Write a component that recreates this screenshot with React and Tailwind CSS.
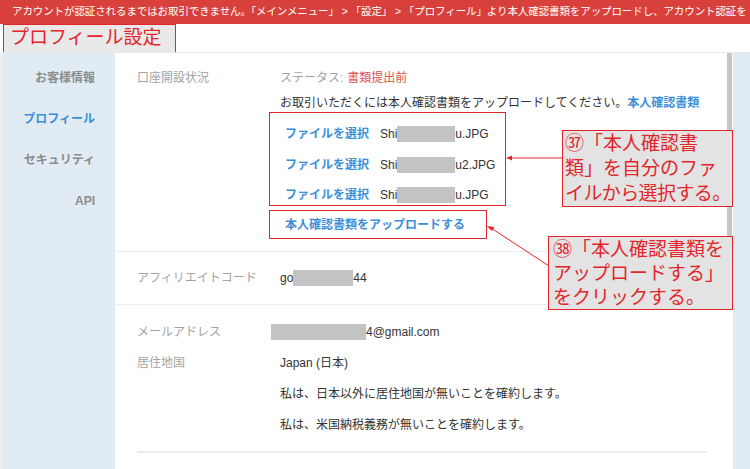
import React from 'react';

const font = "font-['Liberation_Sans','Noto_Sans_CJK_JP',sans-serif]";

function Blur({ w }) {
  return <span className="inline-block h-[16px] bg-[#c3c3c3]" style={{ width: w }} />;
}

function FileRow({ suffix }) {
  return (
    <div className="flex h-[20px] items-center text-[12px]">
      <span className="font-bold text-[#3b8fd9]">ファイルを選択</span>
      <span className="ml-[11px] text-[#333]">Shi</span>
      <Blur w={58} />
      <span className="text-[#333]">{suffix}</span>
    </div>
  );
}

function Row({ label, children, className = '' }) {
  return (
    <div className={`flex h-[20px] items-center text-[12px] ${className}`}>
      <div className="w-[143px] shrink-0 text-[#a3a3a3]">{label}</div>
      <div className="text-[#333]">{children}</div>
    </div>
  );
}

export default function App() {
  return (
    <div className={`relative h-[469px] w-[750px] overflow-hidden bg-white ${font}`}>
      {/* warning banner */}
      <div className="flex h-[24px] items-center overflow-hidden whitespace-nowrap bg-[#d8413b] pl-[12px] text-[10.5px] tracking-[-0.1px] text-white">
        アカウントが認証されるまではお取引できません。「メインメニュー」 &gt; 「設定」 &gt; 「プロフィール」より本人確認書類をアップロードし、アカウント認証を
      </div>

      {/* title */}
      <div className="h-[28px] pl-[3px]">
        <div className="flex h-[29px] w-[173px] items-center border border-[#e2262b] bg-[#e9e9e9] pl-[6px] text-[19px] text-[#e2262b]">
          プロフィール設定
        </div>
      </div>

      <div className="flex h-[417px] border-t border-[#e3eaf0]">
        <div className="w-[3px] bg-[#eceeef]" />

        {/* sidebar */}
        <div className="flex w-[112px] flex-col items-end gap-[23px] bg-[#e1ebf3] pr-[20px] pt-[16px] text-[12px] font-bold text-[#8c8c8c]">
          <div className="flex h-[18px] items-center">お客様情報</div>
          <div className="flex h-[18px] items-center text-[#3b8fd9]">プロフィール</div>
          <div className="flex h-[18px] items-center">セキュリティ</div>
          <div className="flex h-[18px] items-center">API</div>
        </div>

        {/* main panel */}
        <div className="w-[612px] bg-white">
          <div className="flex border-b border-[#ececec] pb-[12px] pl-[22px] pt-[16px] text-[12px]">
            <div className="flex h-[18px] w-[143px] shrink-0 items-center text-[#a3a3a3]">口座開設状況</div>
            <div className="flex flex-col">
              <div className="flex h-[18px] items-center">
                <span className="text-[#a3a3a3]">ステータス:</span>
                <span className="ml-[4px] text-[#d9534f]">書類提出前</span>
              </div>
              <div className="mt-[7px] flex h-[18px] items-center whitespace-nowrap text-[#333]">
                お取引いただくには本人確認書類をアップロードしてください。
                <span className="font-bold text-[#3b8fd9]">本人確認書類</span>
              </div>
              <div className="-ml-[11px] flex w-[237px] flex-col gap-[10.5px] border border-[#e2262b] pl-[15px] pt-[11px]">
                <FileRow suffix="u.JPG" />
                <FileRow suffix="u2.JPG" />
                <FileRow suffix="u.JPG" />
              </div>
              <div className="-ml-[11px] mt-[4px] flex h-[29px] w-[218px] items-center border border-[#e2262b] pl-[15px] font-bold text-[#3b8fd9]">
                本人確認書類をアップロードする
              </div>
            </div>
          </div>

          <div className="flex h-[53px] items-center border-b border-[#ececec] pl-[22px]">
            <Row label="アフィリエイトコード">
              <span className="flex items-center">go<Blur w={60} />44</span>
            </Row>
          </div>

          <div className="px-[22px] pt-[17px]">
            <div className="flex flex-col gap-[11px]">
              <Row label="メールアドレス">
                <span className="-ml-[9px] flex items-center"><Blur w={95} />4@gmail.com</span>
              </Row>
              <Row label="居住地国">Japan (日本)</Row>
              <Row label="">私は、日本以外に居住地国が無いことを確約します。</Row>
              <Row label="">私は、米国納税義務が無いことを確約します。</Row>
            </div>
            <div className="mt-[16px] h-[2px] w-[570px] bg-[#ececec]" />
          </div>
        </div>

        {/* scrollbar */}
        <div className="w-[6px] bg-white">
          <div className="h-[221px] w-[5px] bg-[#c6c6c6]" />
        </div>
        <div className="flex-1 bg-[#e1ebf3]" />
      </div>

      {/* annotations */}
      <svg className="pointer-events-none absolute left-0 top-0" width="750" height="469">
        <line x1="562" y1="158" x2="510" y2="158" stroke="#e2262b" strokeWidth="1" />
        <polygon points="506,158 512,155.5 512,160.5" fill="#e2262b" />
        <line x1="549" y1="266" x2="491" y2="228" stroke="#e2262b" strokeWidth="1" />
        <polygon points="487,226 494.5,227 491.8,231" fill="#e2262b" />
      </svg>

      <div className="absolute left-[562px] top-[130px] h-[77px] w-[171px] overflow-visible whitespace-nowrap border border-[#e2262b] bg-[#e3e3e3] pl-[2px] text-[19px] leading-[25px] text-[#e2262b]">
        <div>㊲「本人確認書</div>
        <div>類」を自分のファ</div>
        <div className="tracking-[-0.6px]">イルから選択する。</div>
      </div>

      <div className="absolute left-[548px] top-[236px] h-[74px] w-[185px] whitespace-nowrap border border-[#e2262b] bg-[#e3e3e3] pl-[4px] pt-[1px] text-[19px] leading-[24px] text-[#e2262b]">
        <div>㊳「本人確認書類を</div>
        <div>アップロードする」</div>
        <div>をクリックする。</div>
      </div>
    </div>
  );
}
